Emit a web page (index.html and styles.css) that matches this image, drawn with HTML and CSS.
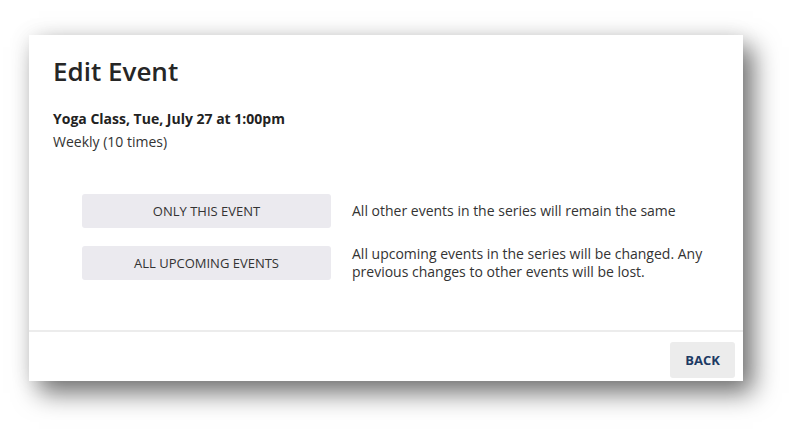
FILE: index.html
```html
<!DOCTYPE html>
<html>
<head>
<meta charset="utf-8">
<link rel="stylesheet" href="styles.css">
</head>
<body>
<div class="page">
  <div class="dialog">
    <div class="content">
      <h1 class="title">Edit Event</h1>
      <p class="event-name">Yoga Class, Tue, July 27 at 1:00pm</p>
      <p class="recurrence">Weekly (10 times)</p>
      <div class="options">
        <div class="option">
          <button class="option-btn">ONLY THIS EVENT</button>
          <p class="option-desc">All other events in the series will remain the same</p>
        </div>
        <div class="option">
          <button class="option-btn">ALL UPCOMING EVENTS</button>
          <p class="option-desc">All upcoming events in the series will be changed. Any previous changes to other events will be lost.</p>
        </div>
      </div>
    </div>
    <div class="footer">
      <button class="back-btn">BACK</button>
    </div>
  </div>
</div>
</body>
</html>
```
FILE: styles.css
```css
html, body {
  margin: 0;
  padding: 0;
  background: #ffffff;
}
body {
  font-family: "Open Sans", "Noto Sans", sans-serif;
  color: #333333;
}
.page {
  min-height: 432px;
  box-sizing: border-box;
  padding: 35px 0 0 29px;
}
.dialog {
  width: 714px;
  height: 346px;
  background: #ffffff;
  display: flex;
  flex-direction: column;
  box-shadow: 10px 12px 24px rgba(0, 0, 0, 0.55), 0 0 22px rgba(0, 0, 0, 0.07);
}
.content {
  padding: 20px 24px 0 24px;
  flex: 1;
  border-bottom: 2px solid #ececec;
}
.title {
  margin: 0;
  font-size: 26px;
  line-height: 32px;
  font-weight: 600;
  color: #262626;
}
.event-name {
  margin: 22px 0 0 0;
  font-size: 14px;
  line-height: 20px;
  font-weight: 700;
  color: #222222;
}
.recurrence {
  margin: 3px 0 0 0;
  font-size: 14px;
  line-height: 20px;
  color: #333333;
}
.options {
  margin: 42px 0 0 29px;
  display: flex;
  flex-direction: column;
  gap: 17px;
}
.option {
  display: flex;
  align-items: center;
  gap: 21px;
}
.option-btn {
  width: 249px;
  height: 34px;
  flex: none;
  border: none;
  border-radius: 3px;
  background: #ebeaef;
  font-family: "Open Sans", "Noto Sans", sans-serif;
  font-size: 13px;
  color: #333333;
  padding: 0;
}
.option-desc {
  margin: 0;
  width: 370px;
  font-size: 14px;
  line-height: 18px;
  color: #333333;
}
.footer {
  height: 49px;
  display: flex;
  justify-content: flex-end;
  align-items: flex-start;
  padding: 10px 8px 0 0;
  box-sizing: border-box;
}
.back-btn {
  width: 65px;
  height: 36px;
  border: none;
  border-radius: 3px;
  background: #ececec;
  font-family: "Open Sans", "Noto Sans", sans-serif;
  font-size: 13px;
  font-weight: 700;
  color: #1c3a64;
  padding: 0;
}
```
